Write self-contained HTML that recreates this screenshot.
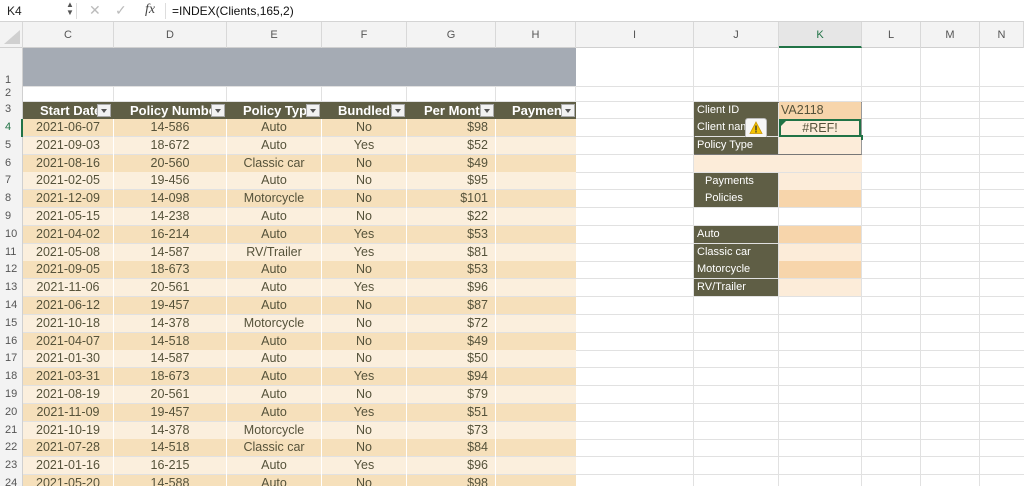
<!DOCTYPE html>
<html><head><meta charset="utf-8"><style>
*{margin:0;padding:0;box-sizing:border-box}
html,body{width:1024px;height:486px;overflow:hidden}
body{background:#fff;font-family:"Liberation Sans",sans-serif;font-size:12.5px;color:#55523a;position:relative}
.a{position:absolute}
.fb{top:0;left:0;width:1024px;height:22px;background:#fff;border-bottom:1px solid #d4d4d4}
.ch{top:22px;left:0;width:1024px;height:26px;background:#f3f3f3;border-bottom:1px solid #d0d0d0}
.chc{position:absolute;top:22px;height:26px;line-height:26px;text-align:center;color:#555;font-size:11px;border-right:1px solid #d8d8d8}
.vl{position:absolute;top:48px;height:438px;width:1px;background:#e1e1e1}
.hl{position:absolute;left:0;width:1024px;height:1px;background:#e1e1e1}
.rn{position:absolute;left:0;width:23px;height:18px;line-height:17px;font-size:11px;color:#555;padding-left:5px;background:#f3f3f3;border-right:1px solid #d0d0d0}
.r{position:absolute;left:0;width:1024px;height:18px}
.r div{position:absolute;top:0;height:17px;line-height:17px;white-space:nowrap;overflow:hidden}
.c{left:23px;width:90px;text-align:center}
.d{left:114px;width:112px;text-align:center}
.e{left:227px;width:94px;text-align:center}
.f{left:322px;width:84px;text-align:center}
.g{left:407px;width:88px;text-align:right;padding-right:7px}
.h{left:496px;width:80px}
.j{left:694px;width:84px;padding-left:3px}
.k{left:779px;width:82px}
.o{background:#f6e0bb}.l{background:#fbefdd}
.hd div{background:#5f5e45;color:#fff;font-weight:bold;font-size:13px}
.dd{position:absolute;width:14px;height:13px;background:#f2f2f2;border:1px solid #aaa;top:2px}
.dd:after{content:"";position:absolute;left:3px;top:4px;border-left:3.5px solid transparent;border-right:3.5px solid transparent;border-top:4px solid #555}
.dk{background:#5f5e45;color:#fff;font-size:11px}
.pk{background:#f7d5ab}.lt{background:#fcecd9}
.wl{position:absolute;left:23px;width:553px;height:1px;background:#fff}
.wv{position:absolute;top:119px;width:1px;height:367px;background:#fff}
</style></head><body>
<div class="a fb"></div>
<div class="a" style="left:7px;top:4px;font-size:12px;color:#222">K4</div>
<div class="a" style="left:66px;top:1px;font-size:8px;color:#555;line-height:8px">▲<br>▼</div>
<div class="a" style="left:76px;top:3px;width:1px;height:16px;background:#ddd"></div>
<div class="a" style="left:89px;top:2px;font-size:14px;color:#bbb">✕</div>
<div class="a" style="left:115px;top:2px;font-size:14px;color:#bbb">✓</div>
<div class="a" style="left:145px;top:2px;font-size:14px;color:#444;font-family:'Liberation Serif',serif;font-style:italic">fx</div>
<div class="a" style="left:165px;top:3px;width:1px;height:16px;background:#ddd"></div>
<div class="a" style="left:172px;top:4px;font-size:12px;color:#111">=INDEX(Clients,165,2)</div>
<div class="a ch"></div>
<div class="a" style="left:4px;top:30px;width:0;height:0;border-left:16px solid transparent;border-bottom:14px solid #d0d0d0"></div>
<div class="chc" style="left:0;width:23px"></div>
<div class="chc" style="left:23px;width:91px">C</div><div class="chc" style="left:114px;width:113px">D</div><div class="chc" style="left:227px;width:95px">E</div><div class="chc" style="left:322px;width:85px">F</div><div class="chc" style="left:407px;width:89px">G</div><div class="chc" style="left:496px;width:80px">H</div><div class="chc" style="left:576px;width:118px">I</div><div class="chc" style="left:694px;width:85px">J</div><div class="chc" style="left:779px;width:83px;background:#e6e6e6;color:#217346;border-bottom:2px solid #217346">K</div><div class="chc" style="left:862px;width:59px">L</div><div class="chc" style="left:921px;width:59px">M</div><div class="chc" style="left:980px;width:44px">N</div>
<div class="vl" style="left:113px"></div><div class="vl" style="left:226px"></div><div class="vl" style="left:321px"></div><div class="vl" style="left:406px"></div><div class="vl" style="left:495px"></div><div class="vl" style="left:575px"></div><div class="vl" style="left:693px"></div><div class="vl" style="left:778px"></div><div class="vl" style="left:861px"></div><div class="vl" style="left:920px"></div><div class="vl" style="left:979px"></div>
<div class="hl" style="top:86px"></div><div class="hl" style="top:101px"></div><div class="hl" style="top:118px"></div><div class="hl" style="top:136px"></div><div class="hl" style="top:154px"></div><div class="hl" style="top:172px"></div><div class="hl" style="top:189px"></div><div class="hl" style="top:207px"></div><div class="hl" style="top:225px"></div><div class="hl" style="top:243px"></div><div class="hl" style="top:261px"></div><div class="hl" style="top:278px"></div><div class="hl" style="top:296px"></div><div class="hl" style="top:314px"></div><div class="hl" style="top:332px"></div><div class="hl" style="top:350px"></div><div class="hl" style="top:367px"></div><div class="hl" style="top:385px"></div><div class="hl" style="top:403px"></div><div class="hl" style="top:421px"></div><div class="hl" style="top:439px"></div><div class="hl" style="top:456px"></div><div class="hl" style="top:474px"></div>
<div class="a" style="left:23px;top:48px;width:553px;height:38px;background:#a5abb4"></div>
<div class="a" style="left:0;top:48px;width:23px;height:438px;background:#f3f3f3;border-right:1px solid #d0d0d0"></div>
<div class="rn" style="top:72px">1</div><div class="rn" style="top:86px;height:15px;line-height:15px">2</div><div class="rn" style="top:101px">3</div><div class="rn" style="top:119px;color:#217346;border-right:2px solid #217346">4</div>
<div class="rn" style="top:137px">5</div><div class="rn" style="top:155px">6</div><div class="rn" style="top:172px">7</div><div class="rn" style="top:190px">8</div><div class="rn" style="top:208px">9</div><div class="rn" style="top:226px">10</div><div class="rn" style="top:244px">11</div><div class="rn" style="top:261px">12</div><div class="rn" style="top:279px">13</div><div class="rn" style="top:297px">14</div><div class="rn" style="top:315px">15</div><div class="rn" style="top:333px">16</div><div class="rn" style="top:350px">17</div><div class="rn" style="top:368px">18</div><div class="rn" style="top:386px">19</div><div class="rn" style="top:404px">20</div><div class="rn" style="top:422px">21</div><div class="rn" style="top:439px">22</div><div class="rn" style="top:457px">23</div><div class="rn" style="top:475px">24</div>

<div class="a" style="left:23px;top:102px;width:553px;height:17px;background:#5f5e45"></div>
<div class="r hd" style="top:102px"><div style="left:40px;width:57px">Start Date</div><div style="left:130px;width:81px">Policy Number</div><div style="left:243px;width:63px">Policy Type</div><div style="left:338px;width:53px">Bundled?</div><div style="left:424px;width:56px">Per Month</div><div style="left:512px;width:49px">Payments</div></div>
<div class="dd" style="left:97px;top:104px"></div><div class="dd" style="left:211px;top:104px"></div><div class="dd" style="left:306px;top:104px"></div><div class="dd" style="left:391px;top:104px"></div><div class="dd" style="left:480px;top:104px"></div><div class="dd" style="left:561px;top:104px"></div>

<div class="r" style="top:119px"><div class="c o">2021-06-07</div><div class="d o">14-586</div><div class="e o">Auto</div><div class="f o">No</div><div class="g o">$98</div><div class="h o"></div></div>
<div class="r" style="top:137px"><div class="c l">2021-09-03</div><div class="d l">18-672</div><div class="e l">Auto</div><div class="f l">Yes</div><div class="g l">$52</div><div class="h l"></div></div>
<div class="r" style="top:155px"><div class="c o">2021-08-16</div><div class="d o">20-560</div><div class="e o">Classic car</div><div class="f o">No</div><div class="g o">$49</div><div class="h o"></div></div>
<div class="r" style="top:172px"><div class="c l">2021-02-05</div><div class="d l">19-456</div><div class="e l">Auto</div><div class="f l">No</div><div class="g l">$95</div><div class="h l"></div></div>
<div class="r" style="top:190px"><div class="c o">2021-12-09</div><div class="d o">14-098</div><div class="e o">Motorcycle</div><div class="f o">No</div><div class="g o">$101</div><div class="h o"></div></div>
<div class="r" style="top:208px"><div class="c l">2021-05-15</div><div class="d l">14-238</div><div class="e l">Auto</div><div class="f l">No</div><div class="g l">$22</div><div class="h l"></div></div>
<div class="r" style="top:226px"><div class="c o">2021-04-02</div><div class="d o">16-214</div><div class="e o">Auto</div><div class="f o">Yes</div><div class="g o">$53</div><div class="h o"></div></div>
<div class="r" style="top:244px"><div class="c l">2021-05-08</div><div class="d l">14-587</div><div class="e l">RV/Trailer</div><div class="f l">Yes</div><div class="g l">$81</div><div class="h l"></div></div>
<div class="r" style="top:261px"><div class="c o">2021-09-05</div><div class="d o">18-673</div><div class="e o">Auto</div><div class="f o">No</div><div class="g o">$53</div><div class="h o"></div></div>
<div class="r" style="top:279px"><div class="c l">2021-11-06</div><div class="d l">20-561</div><div class="e l">Auto</div><div class="f l">Yes</div><div class="g l">$96</div><div class="h l"></div></div>
<div class="r" style="top:297px"><div class="c o">2021-06-12</div><div class="d o">19-457</div><div class="e o">Auto</div><div class="f o">No</div><div class="g o">$87</div><div class="h o"></div></div>
<div class="r" style="top:315px"><div class="c l">2021-10-18</div><div class="d l">14-378</div><div class="e l">Motorcycle</div><div class="f l">No</div><div class="g l">$72</div><div class="h l"></div></div>
<div class="r" style="top:333px"><div class="c o">2021-04-07</div><div class="d o">14-518</div><div class="e o">Auto</div><div class="f o">No</div><div class="g o">$49</div><div class="h o"></div></div>
<div class="r" style="top:350px"><div class="c l">2021-01-30</div><div class="d l">14-587</div><div class="e l">Auto</div><div class="f l">No</div><div class="g l">$50</div><div class="h l"></div></div>
<div class="r" style="top:368px"><div class="c o">2021-03-31</div><div class="d o">18-673</div><div class="e o">Auto</div><div class="f o">Yes</div><div class="g o">$94</div><div class="h o"></div></div>
<div class="r" style="top:386px"><div class="c l">2021-08-19</div><div class="d l">20-561</div><div class="e l">Auto</div><div class="f l">No</div><div class="g l">$79</div><div class="h l"></div></div>
<div class="r" style="top:404px"><div class="c o">2021-11-09</div><div class="d o">19-457</div><div class="e o">Auto</div><div class="f o">Yes</div><div class="g o">$51</div><div class="h o"></div></div>
<div class="r" style="top:422px"><div class="c l">2021-10-19</div><div class="d l">14-378</div><div class="e l">Motorcycle</div><div class="f l">No</div><div class="g l">$73</div><div class="h l"></div></div>
<div class="r" style="top:439px"><div class="c o">2021-07-28</div><div class="d o">14-518</div><div class="e o">Classic car</div><div class="f o">No</div><div class="g o">$84</div><div class="h o"></div></div>
<div class="r" style="top:457px"><div class="c l">2021-01-16</div><div class="d l">16-215</div><div class="e l">Auto</div><div class="f l">Yes</div><div class="g l">$96</div><div class="h l"></div></div>
<div class="r" style="top:475px"><div class="c o">2021-05-20</div><div class="d o">14-588</div><div class="e o">Auto</div><div class="f o">No</div><div class="g o">$98</div><div class="h o"></div></div>
<div class="wv" style="left:113px"></div><div class="wv" style="left:226px"></div><div class="wv" style="left:321px"></div><div class="wv" style="left:406px"></div><div class="wv" style="left:495px"></div>

<div class="a" style="left:694px;top:102px;width:168px;height:53px;border:1px solid #777;border-right-color:#999"></div>
<div class="r" style="top:102px"><div class="j dk">Client ID</div><div class="k pk" style="padding-left:2px">VA2118</div></div>
<div class="r" style="top:119px"><div class="j dk">Client name</div><div class="k lt" style="text-align:center;border:2px solid #217346;height:18px;line-height:14px">#REF!</div></div>
<div class="a" style="left:781px;top:121px;width:0;height:0;border-top:5px solid #217346;border-right:5px solid transparent"></div>
<div class="a" style="left:858px;top:135px;width:5px;height:5px;background:#217346"></div>
<div class="a" style="left:745px;top:118px;width:22px;height:21px;background:#f6f6f6;border:1px solid #bbb;border-radius:3px"></div>
<svg class="a" style="left:749px;top:121px" width="14" height="14" viewBox="0 0 14 14"><path d="M7 1 L13 12.5 H1 Z" fill="#f5c400" stroke="#c89400" stroke-width="0.8"/><rect x="6.3" y="4.5" width="1.4" height="5" fill="#333"/><rect x="6.3" y="10.2" width="1.4" height="1.3" fill="#333"/></svg>
<div class="r" style="top:137px"><div class="j dk">Policy Type</div><div class="k lt"></div></div>
<div class="a" style="left:694px;top:155px;width:168px;height:17px;background:#fcecd9"></div>
<div class="r" style="top:173px"><div class="j dk" style="padding-left:11px">Payments</div><div class="k lt"></div></div>
<div class="r" style="top:190px"><div class="j dk" style="padding-left:11px">Policies</div><div class="k pk"></div></div>
<div class="r" style="top:226px"><div class="j dk">Auto</div><div class="k pk"></div></div>
<div class="r" style="top:244px"><div class="j dk">Classic car</div><div class="k lt"></div></div>
<div class="r" style="top:261px"><div class="j dk">Motorcycle</div><div class="k pk"></div></div>
<div class="r" style="top:279px"><div class="j dk">RV/Trailer</div><div class="k lt"></div></div>
</body></html>
